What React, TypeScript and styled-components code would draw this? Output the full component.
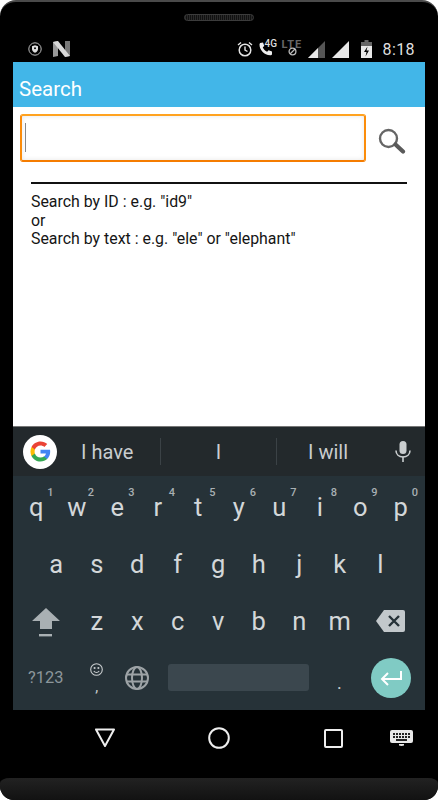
import React from "react";
import styled, { createGlobalStyle } from "styled-components";

const Global = createGlobalStyle`
  html, body { margin: 0; padding: 0; background: #fff; }
  body { font-family: Roboto, "Liberation Sans", sans-serif; }
`;

const Phone = styled.div`
  width: 438px; height: 800px; background: #000; border-radius: 16px 16px 14px 14px;
  overflow: hidden; display: flex; flex-direction: column; box-sizing: border-box;
  border-top: 2px solid #4a4a4a;
`;
const Earpiece = styled.div`
  height: 60px; box-sizing: border-box; padding: 12px 13px 0; display: flex; flex-direction: column; position: relative;
`;
const Speaker = styled.div`
  align-self: center; width: 70px; height: 7px; border: 1px solid #3c3c3c; border-radius: 4px; box-sizing: border-box;
  background: repeating-linear-gradient(90deg, #2a2a2a 0 1px, #111 1px 2px);
`;
const StatusBar = styled.div`
  display: flex; align-items: center; height: 20px; margin-top: 18px; padding: 0 10px 0 15px; color: #e0e0e0;
`;
const StatusLeft = styled.div`display: flex; align-items: center; gap: 11px;`;
const StatusRight = styled.div`display: flex; align-items: center; margin-left: auto;`;
const Time = styled.span`font-size: 16px; letter-spacing: .4px; margin-left: 11px; color: #dfdfdf;`;
const Small4G = styled.span`position: absolute; font-size: 10px; font-weight: 500; top: -3px; left: 7px; color: #ddd;`;
const CallIcon = styled.span`position: relative; display: block; width: 20px; height: 16px; margin-left: 5px;`;
const LteIcon = styled.span`position: relative; display: block; width: 22px; height: 17px; margin: 0 4px 0 4px;`;
const LteText = styled.span`position: absolute; left: 0; top: -3px; font-size: 11px; line-height: 13px; font-weight: 700; color: #666; letter-spacing: 1px;`;
const BlockIcon = styled.svg`position: absolute; left: 6px; top: 6px;`;
const IconGap = styled.svg<{ $ml?: number }>`display: block; margin-left: ${p => p.$ml ?? 0}px;`;

const Screen = styled.div`
  margin: 0 13px; flex: 1; display: flex; flex-direction: column; min-height: 0; background: #fff;
`;
const AppBar = styled.div`
  height: 45px; background: #42b6e8; color: #fff; font-size: 20.5px; display: flex; align-items: center; padding: 9px 0 0 6px; box-sizing: border-box;
`;
const Content = styled.div`flex: 1; background: #fff; padding: 7px 0 0; border-bottom: 1px solid #777; box-sizing: border-box;`;
const SearchRow = styled.div`display: flex; align-items: center; padding-left: 7px;`;
const InputBox = styled.div`
  width: 346px; height: 48px; box-sizing: border-box; border: 2px solid #fb8c0a; border-top-color: #ffa21f; border-bottom-color: #f57c00;
  border-radius: 3px; box-shadow: inset 0 0 5px rgba(0,0,0,.1); padding: 7px 3px; background: #fff;
`;
const Caret = styled.div`width: 1px; height: 29px; background: #888;`;
const SearchBtn = styled.svg`margin-left: 12px; margin-top: 5px;`;
const Help = styled.div`margin: 20px 18px 0; border-top: 2px solid #111; padding-top: 9px; font-size: 15.9px; line-height: 18.5px; color: #151515;`;

const Keyboard = styled.div`height: 283px; background: #263238; display: flex; flex-direction: column;`;
const Strip = styled.div`
  height: 49px; background: #23292c; display: grid; grid-template-columns: 54px 93px 1px 115px 1px 104px 44px; align-items: center; color: #c9cdcf; font-size: 20px;
`;
const GoogleBall = styled.div`
  width: 34px; height: 34px; border-radius: 50%; background: #fff; display: flex; align-items: center; justify-content: center; justify-self: center;
`;
const Suggestion = styled.div<{ $inset: number; $center?: boolean }>`
  padding-left: ${p => p.$inset}px; text-align: ${p => (p.$center ? "center" : "left")}; white-space: nowrap;
`;
const StripRule = styled.div`height: 27px; background: #3b4246;`;
const MicCell = styled.div`display: flex; justify-content: center;`;
const Keys = styled.div`padding: 2px 4px 0 3px; display: grid; grid-template-columns: repeat(10, 40.5px); grid-auto-rows: 57px;`;
const Row = styled.div<{ $indent?: boolean }>`
  grid-column: 1 / -1; display: grid; grid-template-columns: repeat(10, 40.5px); align-items: center; justify-items: center;
  ${p => (p.$indent ? "padding-left: 20px; grid-template-columns: repeat(9, 40.5px);" : "")}
`;
const Key = styled.div`
  position: relative; color: #d3d7d9; font-size: 25.5px; line-height: 30px; text-align: center; width: 100%;
`;
const Sup = styled.span`position: absolute; right: 3px; top: -5px; color: #a9b0b3; font-size: 11px; line-height: 12px; font-weight: 500;`;
const BottomRow = styled.div`
  grid-column: 1 / -1; display: grid; grid-template-columns: 20px 40.5px 40.5px 40.5px 161px 41.5px 1fr; align-items: center; justify-items: center; margin-left: 0;
`;
const ThreeRow = styled.div`
  grid-column: 1 / -1; display: grid; grid-template-columns: 60.5px repeat(7, 40.5px) 1fr; align-items: center; justify-items: center;
`;
const ShiftIcon = styled.svg`margin-top: 4px;`;
const Sym = styled.div`grid-column: 1 / span 2; justify-self: start; margin-left: 12px; color: #8c969b; font-size: 16.4px;`;
const EmojiKey = styled.div`display: flex; flex-direction: column; align-items: center; color: #c8ccce; font-size: 15px; line-height: 10px;`;
const EmojiComma = styled.span`margin-top: 6px;`;
const SpaceBar = styled.div`width: 141px; height: 27px; border-radius: 3px; background: #3b474e;`;
const Period = styled.div`color: #c8ccce; font-size: 18px; padding-top: 10px;`;
const EnterKey = styled.div`
  width: 40px; height: 40px; border-radius: 50%; background: #80cbc4; display: flex; align-items: center; justify-content: center;
`;
const Nav = styled.div`
  height: 68px; padding-left: 48px; display: grid; grid-template-columns: 114px 114px 114px 23px; align-items: center; justify-items: center; padding-bottom: 12px; box-sizing: border-box;
`;
const Chin = styled.div`height: 22px; background: linear-gradient(#222, #121212); border-radius: 10px 10px 0 0 / 5px 5px 0 0;`;

const row1: [string, string][] = [["q","1"],["w","2"],["e","3"],["r","4"],["t","5"],["y","6"],["u","7"],["i","8"],["o","9"],["p","0"]];
const row2 = "asdfghjkl".split("");
const row3 = "zxcvbnm".split("");

export default function App() {
  return (
    <Phone>
      <Global />
      <Earpiece>
        <Speaker />
        <StatusBar>
          <StatusLeft>
            <svg width="14" height="14" viewBox="0 0 14 14">
              <circle cx="7" cy="7" r="6.2" fill="none" stroke="#bbb" strokeWidth="1" />
              <path d="M7 3.2 10 4.3v2.6c0 1.8-1.3 3.2-3 3.8-1.7-.6-3-2-3-3.8V4.3z" fill="#ddd" />
              <circle cx="7" cy="6.3" r="1" fill="#000" />
            </svg>
            <svg width="17" height="16" viewBox="0 0 17 16">
              <path d="M0 1 5 0v15l-5 1z" fill="#999" />
              <path d="M12 0h5v15l-5 1z" fill="#777" />
              <path d="M0 1 5 0l12 15-5 1z" fill="#d8d8d8" />
            </svg>
          </StatusLeft>
          <StatusRight>
            <svg width="16" height="16" viewBox="0 0 16 16" fill="none" stroke="#e4e4e4">
              <circle cx="8" cy="9" r="5.8" strokeWidth="1.5" />
              <path d="M8 5.5V9l2.5 1.5M1 4l3-2.5M15 4l-3-2.5" strokeWidth="1.4" />
            </svg>
            <CallIcon>
              <svg width="15" height="16" viewBox="0 0 15 16">
                <path d="M2.2 2 5 1.5 6.3 5 4.8 6.3c.8 2 2.4 3.600 4.300 4.500l1.500-1.500 3.400 1.300v2.900l-1 .8C6.500 14.800 1.200 9 1.500 3z" fill="#eee" />
              </svg>
              <Small4G>4G</Small4G>
            </CallIcon>
            <LteIcon>
              <LteText>LTE</LteText>
              <BlockIcon width="9" height="9" viewBox="0 0 9 9" fill="none" stroke="#bbb" strokeWidth="1.300">
                <circle cx="4.500" cy="4.500" r="3.400" fill="#000" />
                <path d="M2 7 7 2" />
              </BlockIcon>
            </LteIcon>
            <svg width="17" height="17" viewBox="0 0 17 17">
              <path d="M17 0v17H0z" fill="#555" />
              <path d="M10 7v10H0z" fill="#e8e8e8" />
            </svg>
            <IconGap $ml={7} width="17" height="17" viewBox="0 0 17 17">
              <path d="M17 0v17H0z" fill="#e8e8e8" />
            </IconGap>
            <IconGap $ml={12} width="11" height="18" viewBox="0 0 11 18">
              <path d="M3.500 0h4v2H3.500z" fill="#666" />
              <path d="M0 2h11v4H0z" fill="#666" />
              <path d="M0 6h11v12H0z" fill="#e8e8e8" />
              <path d="M6.500 6.500 3 12h2.500l-1 4.500L8 10.500H5.500z" fill="#000" />
            </IconGap>
            <Time>8:18</Time>
          </StatusRight>
        </StatusBar>
      </Earpiece>
      <Screen>
        <AppBar>Search</AppBar>
        <Content>
          <SearchRow>
            <InputBox><Caret /></InputBox>
            <SearchBtn width="28" height="26" viewBox="0 0 28 26" fill="none">
              <circle cx="10.500" cy="10.500" r="8.500" stroke="#666" strokeWidth="2.400" />
              <path d="M17.500 16.500 25 23.500" stroke="#5a5a5a" strokeWidth="4.200" strokeLinecap="round" />
            </SearchBtn>
          </SearchRow>
          <Help>
            Search by ID : e.g. "id9"<br />
            or<br />
            Search by text : e.g. "ele" or "elephant"
          </Help>
        </Content>
        <Keyboard>
          <Strip>
            <GoogleBall>
              <svg width="21" height="21" viewBox="0 0 48 48">
                <path fill="#4285F4" d="M46.100 24.500c0-1.600-.1-3.100-.4-4.600H24v8.700h12.400c-.5 2.900-2.200 5.300-4.600 6.900v5.700h7.400c4.400-4 6.900-9.900 6.900-16.700z" />
                <path fill="#34A853" d="M24 47c6.200 0 11.400-2.100 15.200-5.600l-7.400-5.700c-2.100 1.400-4.700 2.200-7.800 2.200-6 0-11-4-12.800-9.500H3.500v5.900C7.300 41.800 15 47 24 47z" />
                <path fill="#FBBC05" d="M11.200 28.400c-.5-1.400-.7-2.900-.7-4.400s.3-3 .7-4.400v-5.900H3.500C2 16.800 1 20.300 1 24s.9 7.200 2.500 10.300z" />
                <path fill="#EA4335" d="M24 10.100c3.400 0 6.400 1.200 8.800 3.400l6.600-6.600C35.400 3.200 30.200 1 24 1 15 1 7.300 6.200 3.500 13.700l7.700 5.900C13 14.100 18 10.100 24 10.100z" />
              </svg>
            </GoogleBall>
            <Suggestion $inset={14}>I have</Suggestion>
            <StripRule />
            <Suggestion $inset={0} $center>I</Suggestion>
            <StripRule />
            <Suggestion $inset={31}>I will</Suggestion>
            <MicCell>
              <svg width="16" height="21" viewBox="0 0 16 21" fill="#c9cdcf">
                <rect x="4.500" y="0" width="7" height="13" rx="3.500" />
                <path d="M1 9.500c0 4 3 6.500 7 6.500s7-2.500 7-6.500" fill="none" stroke="#c9cdcf" strokeWidth="1.600" />
                <rect x="7.200" y="15.500" width="1.600" height="5.500" />
              </svg>
            </MicCell>
          </Strip>
          <Keys>
            <Row>
              {row1.map(([k, n]) => (
                <Key key={k}>{k}<Sup>{n}</Sup></Key>
              ))}
            </Row>
            <Row $indent>
              {row2.map(k => <Key key={k}>{k}</Key>)}
            </Row>
            <ThreeRow>
              <ShiftIcon width="28" height="30" viewBox="0 0 28 30" fill="#a9b0b3">
                <path d="M14 0 28 13h-8v8H8v-8H0z" />
                <rect x="7" y="26" width="13" height="2.400" />
              </ShiftIcon>
              {row3.map(k => <Key key={k}>{k}</Key>)}
              <svg width="29" height="22" viewBox="0 0 29 22">
                <path d="M8 0h19a2 2 0 0 1 2 2v18a2 2 0 0 1-2 2H8L0 11z" fill="#c2c8cb" />
                <path d="M13 6l10 10M23 6 13 16" stroke="#263238" strokeWidth="2.400" />
              </svg>
            </ThreeRow>
            <BottomRow>
              <Sym>?123</Sym>
              <EmojiKey>
                <svg width="13" height="13" viewBox="0 0 13 13" fill="none" stroke="#c8ccce" strokeWidth="1.100">
                  <circle cx="6.500" cy="6.500" r="5.800" />
                  <path d="M3.800 8c.7 1 1.600 1.500 2.700 1.500S8.500 9 9.200 8" />
                  <circle cx="4.600" cy="5" r=".5" />
                  <circle cx="8.400" cy="5" r=".5" />
                </svg>
                <EmojiComma>,</EmojiComma>
              </EmojiKey>
              <svg width="24" height="24" viewBox="0 0 24 24" fill="none" stroke="#9da3a6" strokeWidth="2">
                <circle cx="12" cy="12" r="11" />
                <ellipse cx="12" cy="12" rx="5" ry="11" />
                <path d="M1.500 8.500h21M1.500 15.500h21" />
              </svg>
              <SpaceBar />
              <Period>.</Period>
              <EnterKey>
                <svg width="22" height="16" viewBox="0 0 22 16" fill="none" stroke="#fff" strokeWidth="2">
                  <path d="M21 1v8H2" />
                  <path d="M8 3 2 9l6 6" />
                </svg>
              </EnterKey>
            </BottomRow>
          </Keys>
        </Keyboard>
      </Screen>
      <Nav>
        <svg width="22" height="20" viewBox="0 0 22 20" fill="none" stroke="#eee" strokeWidth="2">
          <path d="M2 1.500h18L11 18z" strokeLinejoin="round" />
        </svg>
        <svg width="22" height="22" viewBox="0 0 22 22" fill="none" stroke="#eee" strokeWidth="2">
          <circle cx="11" cy="11" r="9.800" />
        </svg>
        <svg width="19" height="19" viewBox="0 0 19 19" fill="none" stroke="#eee" strokeWidth="2">
          <rect x="1" y="1" width="17" height="17" rx="1" />
        </svg>
        <svg width="23" height="16" viewBox="0 0 23 16">
          <path d="M2 0h19a2 2 0 0 1 2 2v9a2 2 0 0 1-2 2H2a2 2 0 0 1-2-2V2a2 2 0 0 1 2-2z" fill="#e8e8e8" />
          <path d="M3 3h2v2H3zM6 3h2v2H6zM9 3h2v2H9zM12 3h2v2h-2zM15 3h2v2h-2zM18 3h2v2h-2zM3 6h2v2H3zM6 6h2v2H6zM9 6h2v2H9zM12 6h2v2h-2zM15 6h2v2h-2zM18 6h2v2h-2zM6 9h11v2H6z" fill="#222" />
          <path d="M9 14h5v1.500l-2.500.5L9 15.500z" fill="#e8e8e8" />
        </svg>
      </Nav>
      <Chin />
    </Phone>
  );
}
